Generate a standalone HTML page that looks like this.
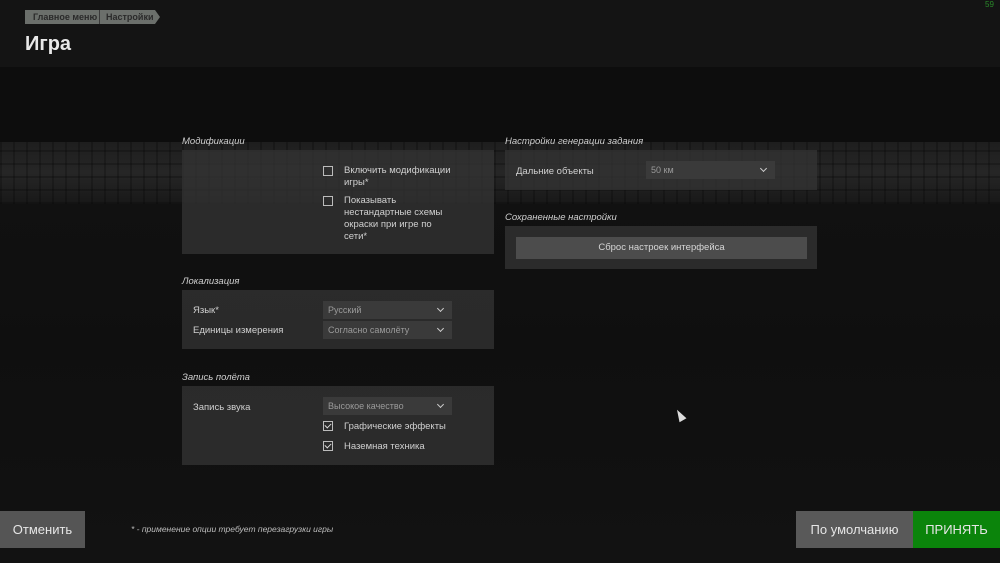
<!DOCTYPE html>
<html><head><meta charset="utf-8"><style>
*{margin:0;padding:0;box-sizing:border-box}
body{width:1000px;height:563px;overflow:hidden;background:#0d0d0d;font-family:"Liberation Sans","DejaVu Sans",sans-serif;color:#d8d8d8;position:relative}
.abs{position:absolute;white-space:nowrap}
.top{left:0;top:0;width:1000px;height:67px;background:#141414}
.band{left:0;top:142px;width:1000px;height:62px;background:
repeating-linear-gradient(90deg,rgba(0,0,0,.22) 0 2px,transparent 2px 13px),
repeating-linear-gradient(0deg,rgba(0,0,0,.22) 0 2px,transparent 2px 13px),
linear-gradient(#1e1e1e,#262626 50%,#181818)}
.low{left:0;top:204px;width:1000px;height:359px;background:linear-gradient(#111,#0f0f0f 40%,#121212)}
.crumb{top:10px;height:14px;background:#6b6f6b;color:#2a2a2a;font-size:9px;font-weight:bold;line-height:14px;padding-left:8px;overflow:hidden}
h1{position:absolute;left:25px;top:33px;font-size:20px;font-weight:bold;color:#e8e8e8}
.sec{font-size:9.5px;font-style:italic;color:#cfcfcf}
.panel{background:rgba(52,52,52,.75)}
.lbl{font-size:9.5px;color:#d0d0d0}
.dd{width:129px;height:18px;background:#3a3a3a;font-size:9px;color:#9a9a9a;line-height:18px;padding-left:5px}
.dd:after{content:"";position:absolute;right:9px;top:5px;width:4px;height:4px;border-right:1.3px solid #ccc;border-bottom:1.3px solid #ccc;transform:rotate(45deg)}
.cb{width:10px;height:10px;border:1.3px solid #bbb}
.ck:after{content:"";position:absolute;left:2px;top:0px;width:3px;height:5px;border-right:1.3px solid #ddd;border-bottom:1.3px solid #ddd;transform:rotate(45deg)}
.btn{height:37px;font-size:13px;line-height:37px;text-align:center;color:#e6e6e6}
</style></head><body>
<div class="abs top"></div>
<div class="abs band"></div>
<div class="abs low"></div>
<div class="abs" style="left:985px;top:0;font-size:8px;color:#2a8a2a">59</div>
<div class="abs crumb" style="left:25px;width:74px">Главное меню</div>
<div class="abs crumb" style="left:99px;width:56px;border-left:1px solid #3a3a3a;padding-left:6px">Настройки</div>
<div class="abs" style="left:155px;top:10px;width:0;height:0;border-top:7px solid transparent;border-bottom:7px solid transparent;border-left:5px solid #6b6f6b"></div>
<h1>Игра</h1>

<div class="abs sec" style="left:182px;top:136px">Модификации</div>
<div class="abs panel" style="left:182px;top:150px;width:312px;height:104px"></div>
<div class="abs cb" style="left:323px;top:166px"></div>
<div class="abs lbl" style="left:344px;top:165px;width:110px;line-height:12px;white-space:normal">Включить модификации игры*</div>
<div class="abs cb" style="left:323px;top:196px"></div>
<div class="abs lbl" style="left:344px;top:195px;width:110px;line-height:12px;white-space:normal">Показывать нестандартные схемы окраски при игре по сети*</div>

<div class="abs sec" style="left:182px;top:276px">Локализация</div>
<div class="abs panel" style="left:182px;top:290px;width:312px;height:59px"></div>
<div class="abs lbl" style="left:193px;top:305px">Язык*</div>
<div class="abs dd" style="left:323px;top:301px">Русский</div>
<div class="abs lbl" style="left:193px;top:325px">Единицы измерения</div>
<div class="abs dd" style="left:323px;top:321px">Согласно самолёту</div>

<div class="abs sec" style="left:182px;top:372px">Запись полёта</div>
<div class="abs panel" style="left:182px;top:386px;width:312px;height:79px"></div>
<div class="abs lbl" style="left:193px;top:402px">Запись звука</div>
<div class="abs dd" style="left:323px;top:397px">Высокое качество</div>
<div class="abs cb ck" style="left:323px;top:421px"></div>
<div class="abs lbl" style="left:344px;top:421px">Графические эффекты</div>
<div class="abs cb ck" style="left:323px;top:441px"></div>
<div class="abs lbl" style="left:344px;top:441px">Наземная техника</div>

<div class="abs sec" style="left:505px;top:136px">Настройки генерации задания</div>
<div class="abs panel" style="left:505px;top:150px;width:312px;height:40px"></div>
<div class="abs lbl" style="left:516px;top:166px">Дальние объекты</div>
<div class="abs dd" style="left:646px;top:161px">50 км</div>

<div class="abs sec" style="left:505px;top:212px">Сохраненные настройки</div>
<div class="abs panel" style="left:505px;top:226px;width:312px;height:43px"></div>
<div class="abs" style="left:516px;top:237px;width:291px;height:22px;background:#4c4c4c;font-size:9.5px;color:#d6d6d6;text-align:center;line-height:22px">Сброс настроек интерфейса</div>

<div class="abs" style="left:676px;top:409px;width:0;height:0;border-left:4px solid transparent;border-right:4px solid transparent;border-bottom:12px solid #ddd;transform:rotate(-30deg)"></div>

<div class="abs btn" style="left:0;top:511px;width:85px;background:#555">Отменить</div>
<div class="abs" style="left:131px;top:524px;font-size:8.5px;font-style:italic;color:#bdbdbd">* - применение опции требует перезагрузки игры</div>
<div class="abs btn" style="left:796px;top:511px;width:117px;background:#595959">По умолчанию</div>
<div class="abs btn" style="left:913px;top:511px;width:87px;background:#0b840b">ПРИНЯТЬ</div>
</body></html>
